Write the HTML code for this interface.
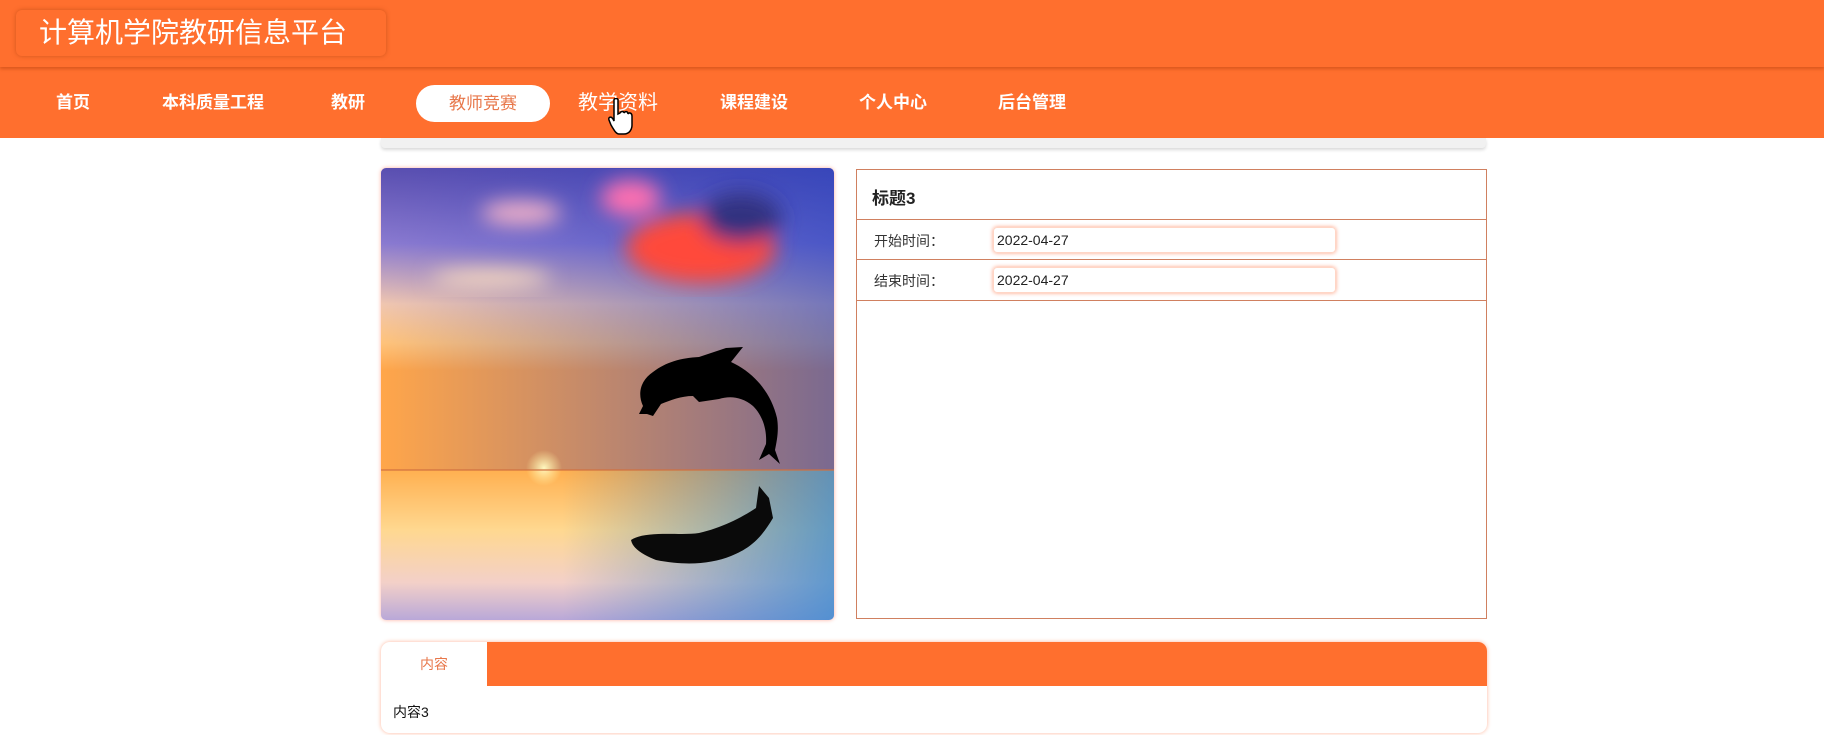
<!DOCTYPE html>
<html><head><meta charset="utf-8"><style>
*{margin:0;padding:0;box-sizing:border-box}
body{width:1824px;height:735px;background:#fff;font-family:"Liberation Sans","Noto Sans CJK SC",sans-serif;position:relative;overflow:hidden}
.nav{position:absolute;left:0;top:0;width:1824px;height:138px;background:#ff6f2e}
.hdr{position:absolute;left:0;top:0;width:1824px;height:67px;background:#ff6f2e;box-shadow:0 2px 3px rgba(170,60,10,.45);z-index:1}
.title{position:absolute;left:16px;top:10px;width:370px;height:46px;border-radius:6px;background:#ff6f2e;box-shadow:0 0 4px rgba(160,60,10,.5);color:#fff;font-size:28px;line-height:46px;padding-left:23px}
.nav span{position:absolute;top:68px;line-height:70px;color:#fff;font-size:17px;transform:translateX(-50%);white-space:nowrap;font-weight:bold}
.pill{position:absolute;left:416px;top:85px;width:134px;height:37px;border-radius:19px;background:#fff;color:#e8774a;font-size:17px;line-height:37px;text-align:center;z-index:2}
.gbar{position:absolute;left:381px;top:138px;width:1105px;height:10px;background:#f1f1f1;box-shadow:0 2px 3px rgba(0,0,0,.15);border-radius:0 0 4px 4px}
.img{position:absolute;left:381px;top:168px;width:453px;height:452px;border-radius:5px;overflow:hidden;box-shadow:0 0 4px #ffb0a0}
.panel{position:absolute;left:856px;top:169px;width:631px;height:450px;border:1.5px solid #d08060}
.row{position:absolute;left:0;width:100%;border-bottom:1.5px solid #d08060}
.lbl{position:absolute;left:17px;font-size:14px;color:#333}
.inp{position:absolute;left:136px;width:343px;height:26px;border-radius:4px;box-shadow:0 0 4px #ff9f80;border:1px solid #ffd6c6;font-size:14px;line-height:24px;padding-left:3px;color:#222}
.card{position:absolute;left:381px;top:642px;width:1106px;height:91px;border-radius:9px;box-shadow:0 0 4px #ffb59a;overflow:hidden;background:#fff}
.card .bar{position:absolute;left:106px;top:0;right:0;height:44px;background:#ff6f2e}
.card .tab{position:absolute;left:0;top:0;width:106px;height:44px;text-align:center;line-height:44px;color:#e8774a;font-size:14px}
.card .txt{position:absolute;left:12px;top:60px;font-size:14px;color:#111}
</style></head><body>
<div class="nav">
<span style="left:73px">首页</span>
<span style="left:213px">本科质量工程</span>
<span style="left:348px">教研</span>
<span style="left:618px;font-size:20px;font-weight:normal">教学资料</span>
<span style="left:754px">课程建设</span>
<span style="left:893px">个人中心</span>
<span style="left:1032px">后台管理</span>
</div>
<div class="hdr"><div class="title">计算机学院教研信息平台</div></div>
<div class="pill">教师竞赛</div>
<svg style="position:absolute;left:608px;top:98px;z-index:3" width="26" height="40" viewBox="0 0 26 40"><path d="M6 2 C6 0 10 0 10 2 L10 16 L12 15 C13 13 16 13 16 15 C17 13 20 13 20 16 C21 14 24 15 24 18 L24 27 C24 32 21 36 16 36 L11 36 C8 36 6 32 3 27 L1 22 C0 19 3 18 5 21 L6 23 Z" fill="#fff" stroke="#000" stroke-width="1.5"/></svg>
<div class="gbar"></div>
<div class="img"><svg width="453" height="452" viewBox="0 0 453 452">
<defs>
<linearGradient id="sky" x1="0" y1="0" x2="0" y2="1">
<stop offset="0" stop-color="#5a4fb0"/><stop offset=".25" stop-color="#8a7ad0"/><stop offset=".45" stop-color="#f0c6b0"/><stop offset=".58" stop-color="#ffc37a"/><stop offset=".67" stop-color="#ffa64a"/></linearGradient>
<linearGradient id="sea" x1="0" y1="0" x2="0" y2="1">
<stop offset="0" stop-color="#ffb050"/><stop offset=".4" stop-color="#ffd890"/><stop offset=".75" stop-color="#f3d0c8"/><stop offset="1" stop-color="#b9a8d8"/></linearGradient>
<linearGradient id="rs" x1="0" y1="0" x2="1" y2="0"><stop offset="0" stop-color="#2a3cc0" stop-opacity="0"/><stop offset="1" stop-color="#2040c0" stop-opacity=".85"/></linearGradient>
<linearGradient id="rw" x1="0" y1="0" x2="1" y2="0"><stop offset=".4" stop-color="#3a80c0" stop-opacity="0"/><stop offset="1" stop-color="#3a8ad0" stop-opacity=".8"/></linearGradient>
<radialGradient id="sun" cx=".5" cy=".5" r=".5"><stop offset="0" stop-color="#fff8c0"/><stop offset="1" stop-color="#fff0a0" stop-opacity="0"/></radialGradient>
<filter id="b"><feGaussianBlur stdDeviation="10"/></filter>
</defs>
<rect width="453" height="302" fill="url(#sky)"/>
<rect width="453" height="302" fill="url(#rs)" opacity=".7"/>
<rect y="302" width="453" height="150" fill="url(#sea)"/>
<rect y="302" width="453" height="150" fill="url(#rw)"/>
<g filter="url(#b)"><ellipse cx="320" cy="80" rx="75" ry="35" fill="#ff4a3a"/><ellipse cx="360" cy="50" rx="40" ry="25" fill="#303080"/><ellipse cx="250" cy="30" rx="30" ry="18" fill="#ff70b0"/><ellipse cx="140" cy="45" rx="40" ry="12" fill="#f0b0c8"/><ellipse cx="110" cy="110" rx="60" ry="8" fill="#ffe0c0"/></g>
<circle cx="163" cy="300" r="18" fill="url(#sun)"/>
<rect y="301" width="453" height="2" fill="#d07040" opacity=".6"/>
<path d="M258 246 L262 238 C256 225 260 212 272 204 C285 194 300 190 318 189 L345 180 L362 179 L350 194 C372 204 390 224 396 250 C398 262 396 272 394 282 L399 296 L388 286 L378 292 L385 276 C386 262 382 248 372 238 C360 228 348 228 338 231 L318 234 L312 228 C300 228 290 232 280 236 L272 248 L266 246 Z" fill="#000"/>
<path d="M250 372 C265 362 300 368 318 365 C340 360 360 350 375 340 L378 318 L388 330 L392 350 C380 370 370 380 350 388 C330 396 305 398 275 392 C265 388 252 382 250 372Z" fill="#0a0a0a"/>
</svg></div>
<div class="panel">
<div class="row" style="top:0;height:50px"><div style="position:absolute;left:15px;top:14px;font-size:17px;font-weight:bold;color:#222">标题3</div></div>
<div class="row" style="top:50px;height:40px"><div class="lbl" style="top:11px">开始时间：</div><div class="inp" style="top:7px">2022-04-27</div></div>
<div class="row" style="top:90px;height:41px"><div class="lbl" style="top:11px">结束时间：</div><div class="inp" style="top:7px">2022-04-27</div></div>
</div>
<div class="card"><div class="bar"></div><div class="tab">内容</div><div class="txt">内容3</div></div>
</body></html>
